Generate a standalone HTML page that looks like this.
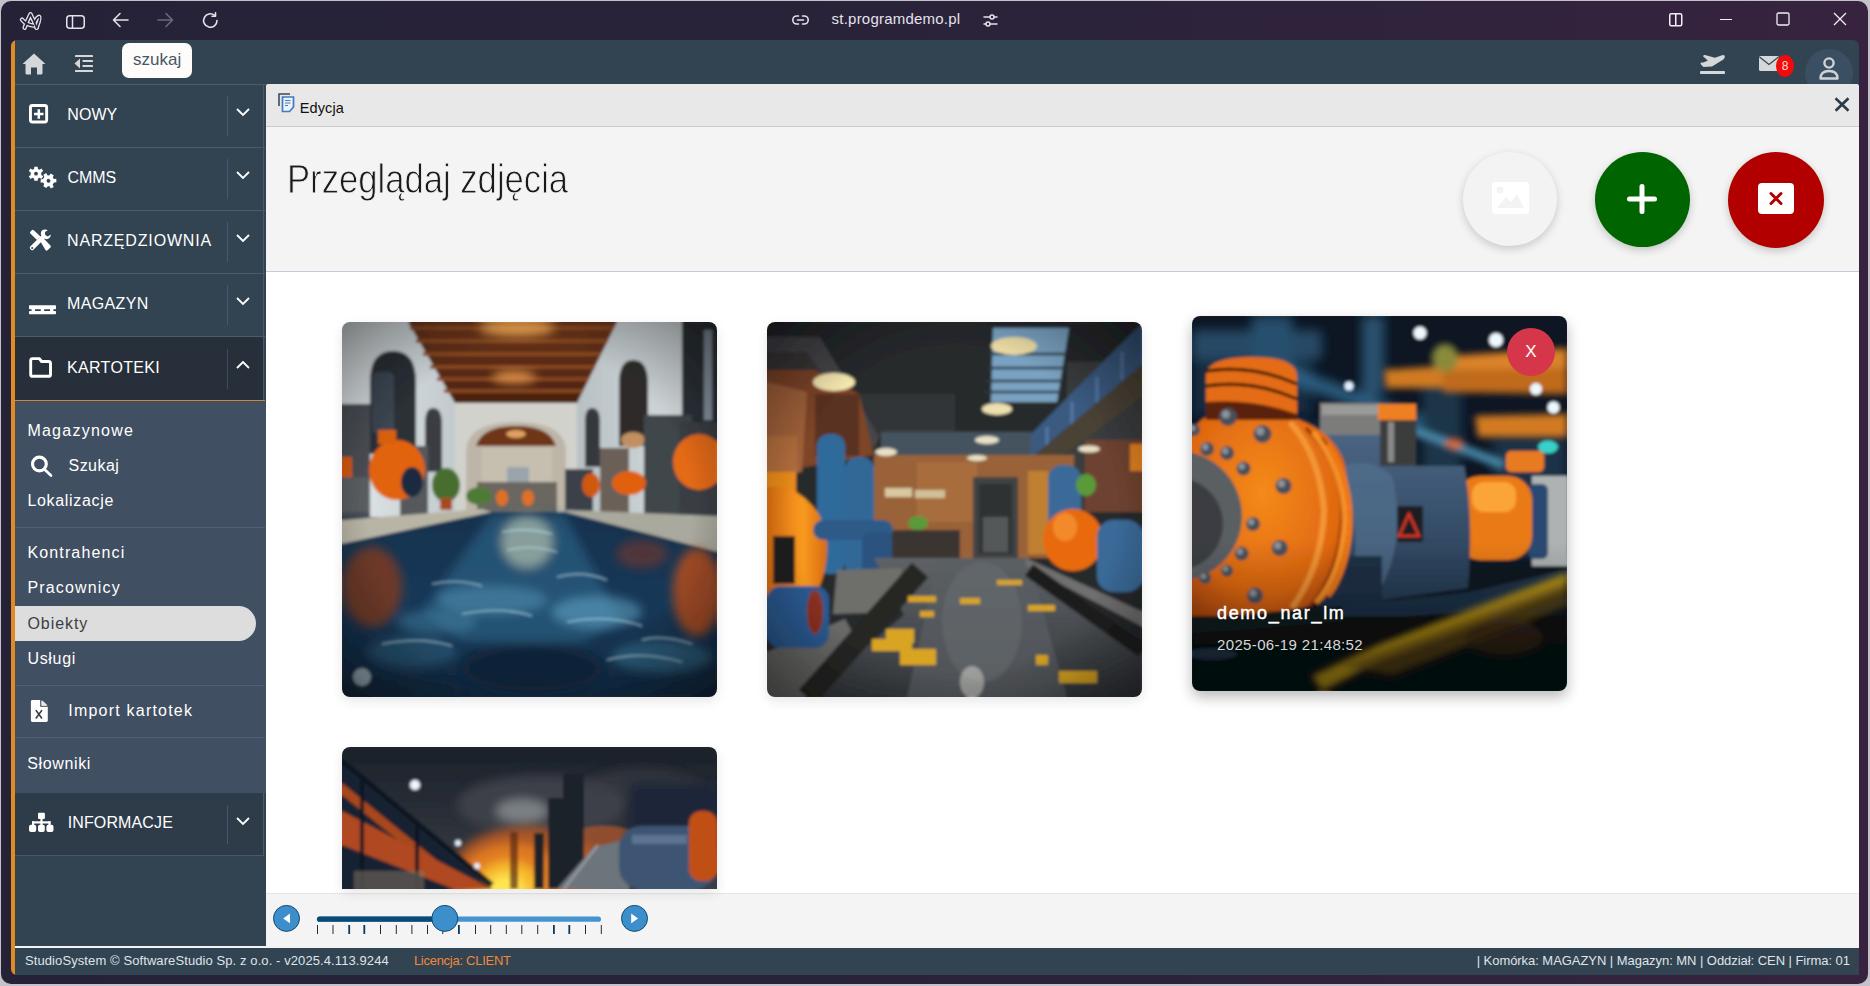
<!DOCTYPE html>
<html><head><meta charset="utf-8">
<style>
*{box-sizing:border-box;margin:0;padding:0}
html,body{width:1870px;height:986px;overflow:hidden;background:#c4c2c9;font-family:"Liberation Sans",sans-serif;position:relative}
.a{position:absolute}
svg{display:block;overflow:visible}
#win{left:1px;top:1px;width:1867px;height:983px;border-radius:10px;background:linear-gradient(90deg,#252238 0%,#2a2339 55%,#37233f 100%)}
#app{left:11px;top:40px;width:1848px;height:935px;border-radius:6px;overflow:hidden;background:#324351}
.sep{height:1px;background:#4b5c6d}
.mi{color:#fff;font-size:16px;white-space:nowrap;line-height:1}
.sub{color:#fff;font-size:16px;white-space:nowrap;line-height:1}
.tx{white-space:nowrap;line-height:1}
.ft{color:#dfe4ea;font-size:12.5px;white-space:nowrap;line-height:1}
</style></head><body>
<div id="win" class="a"></div>

<!-- browser title bar icons -->
<svg class="a" style="left:16px;top:8px" width="30" height="26" viewBox="0 0 30 26" fill="none" stroke-linecap="round" stroke-linejoin="round">
  <g stroke="#e6e1ec" stroke-width="4.4"><path d="M8.6 19.8 Q11 13 14.5 6.2 Q18 13 20.6 19.8"/><path d="M6 11.6 Q10 16.6 17.4 17.6"/><path d="M18.5 14.5 Q21.5 8.5 23.3 8.8 Q24.6 9.6 20.6 19.8"/></g>
  <g stroke="#252238" stroke-width="1.7"><path d="M8.6 19.8 Q11 13 14.5 6.2 Q18 13 20.6 19.8"/><path d="M6 11.6 Q10 16.6 17.4 17.6"/><path d="M18.5 14.5 Q21.5 8.5 23.3 8.8 Q24.6 9.6 20.6 19.8"/></g>
</svg>
<svg class="a" style="left:66px;top:15px" width="19" height="14" viewBox="0 0 19 14" fill="none" stroke="#e6e1ec" stroke-width="1.5">
  <rect x="0.75" y="0.75" width="17.5" height="12.5" rx="3"/><line x1="6.5" y1="1" x2="6.5" y2="13"/>
</svg>
<svg class="a" style="left:112px;top:12px" width="17" height="16" viewBox="0 0 17 16" fill="none" stroke="#e6e1ec" stroke-width="1.6" stroke-linecap="round" stroke-linejoin="round">
  <path d="M16 8 H1.5 M8 1.5 L1.5 8 L8 14.5"/>
</svg>
<svg class="a" style="left:157px;top:12px" width="17" height="16" viewBox="0 0 17 16" fill="none" stroke="#6d6780" stroke-width="1.6" stroke-linecap="round" stroke-linejoin="round">
  <path d="M1 8 H15.5 M9 1.5 L15.5 8 L9 14.5"/>
</svg>
<svg class="a" style="left:202px;top:12px" width="17" height="17" viewBox="0 0 17 17" fill="none" stroke="#e6e1ec" stroke-width="1.6" stroke-linecap="round" stroke-linejoin="round">
  <path d="M15 8.5 A6.7 6.7 0 1 1 12.6 3.4"/><path d="M13.5 0.8 V4.2 H10"/>
</svg>
<svg class="a" style="left:792px;top:15px" width="17" height="10" viewBox="0 0 17 10" fill="none" stroke="#e6e1ec" stroke-width="1.6" stroke-linecap="round">
  <path d="M6.5 1 H4.8 A3.8 3.8 0 0 0 4.8 9 H6.5 M10.5 1 H12.2 A3.8 3.8 0 0 1 12.2 9 H10.5 M5.5 5 H11.5"/>
</svg>
<svg class="a" style="left:983px;top:14px" width="15" height="13" viewBox="0 0 15 13" fill="none" stroke="#e6e1ec" stroke-width="1.5" stroke-linecap="round">
  <path d="M1 3 H14 M1 10 H14"/><circle cx="9" cy="3" r="2" fill="#2a2339"/><circle cx="5" cy="10" r="2" fill="#2a2339"/>
</svg>
<svg class="a" style="left:1669px;top:13px" width="14" height="14" viewBox="0 0 14 14" fill="none" stroke="#f2eef5" stroke-width="1.5">
  <rect x="0.75" y="0.75" width="12" height="12" rx="1.5"/><line x1="6.75" y1="1" x2="6.75" y2="13"/>
</svg>
<div class="a" style="left:1720px;top:19px;width:12px;height:1.3px;background:#f2eef5"></div>
<svg class="a" style="left:1776px;top:12px" width="14" height="14" viewBox="0 0 14 14" fill="none" stroke="#f2eef5" stroke-width="1.3">
  <rect x="1" y="1" width="12" height="12" rx="1.5"/>
</svg>
<svg class="a" style="left:1833px;top:12px" width="14" height="14" viewBox="0 0 14 14" fill="none" stroke="#f2eef5" stroke-width="1.3">
  <path d="M1 1 L13 13 M13 1 L1 13"/>
</svg>

<div id="app" class="a">
  <div class="a" style="left:0;top:0;width:4px;height:935px;background:#e28b22"></div>
</div>

<!-- top app bar -->
<div class="a sep" style="left:15px;top:84px;width:251px"></div>
<svg class="a" style="left:22px;top:53px" width="24" height="22" viewBox="0 0 24 22">
  <path d="M12 0.5 L23.5 11 L20.5 11 L20.5 20 Q20.5 21.5 19 21.5 L15 21.5 L15 14.5 L9 14.5 L9 21.5 L5 21.5 Q3.5 21.5 3.5 20 L3.5 11 L0.5 11 Z" fill="#d6d7d9"/>
</svg>
<svg class="a" style="left:74px;top:54px" width="20" height="19" viewBox="0 0 20 19" fill="#d6d7d9">
  <rect x="1" y="1" width="18" height="2" rx="0.5"/><rect x="8.5" y="6" width="10.5" height="2" rx="0.5"/><rect x="8.5" y="11" width="10.5" height="2" rx="0.5"/><rect x="1" y="16" width="18" height="2" rx="0.5"/>
  <path d="M0.5 9.5 L6 4.5 L6 14.5 Z"/>
</svg>
<div class="a" style="left:122px;top:43px;width:70px;height:35px;border-radius:7px;background:#fdfcfb"></div>

<svg class="a" style="left:1700px;top:54px" width="26" height="21" viewBox="0 0 26 21" fill="#d6d7d9">
  <path d="M3.5 13 L12 12.5 L23.4 5.4 Q25.2 3.6 24.8 2.2 Q24 0.8 22.8 1.1 L14.9 3.7 L5 1 Q3.6 0.8 3 2.2 L7.8 6.5 L3.5 8.5 L1.2 8.6 Q0.2 9 0.7 10.2 Z"/>
  <rect x="0" y="17" width="25" height="3" rx="0.8"/>
</svg>
<svg class="a" style="left:1759px;top:56px" width="20" height="15" viewBox="0 0 20 15">
  <rect x="0" y="0" width="20" height="15" rx="1.5" fill="#d6d7d9"/><path d="M0.5 1 L10 8.5 L19.5 1" fill="none" stroke="#324351" stroke-width="1.2"/>
</svg>
<div class="a" style="left:1776px;top:55px;width:18px;height:22px;border-radius:50%;background:#f20b0b"></div>
<div class="a" style="left:1776px;top:59px;width:18px;text-align:center;font-size:12px;line-height:1.2;color:#ffd8d0">8</div>
<div class="a" style="left:1805px;top:49px;width:48px;height:35px;overflow:hidden"><div style="width:48px;height:48px;border-radius:50%;background:#3b4f63"></div></div>
<svg class="a" style="left:1819px;top:57px" width="20" height="23" viewBox="0 0 20 23" fill="none" stroke="#d0d3d6" stroke-width="2.4">
  <circle cx="10" cy="6" r="4.6"/><path d="M1.5 21.5 Q1.5 14 10 14 Q18.5 14 18.5 21.5 Z" stroke-linejoin="round"/>
</svg>

<!-- content panel -->
<div class="a" style="left:266px;top:84px;width:1593px;height:862px;background:#fff;border-radius:3px 3px 0 0;overflow:hidden">
  <div class="a" style="left:0;top:0;width:1593px;height:43px;background:#e8e8e8;border-bottom:1px solid #c9c9c9"></div>
  <div class="a" style="left:0;top:43px;width:1593px;height:145px;background:#f4f4f4;border-bottom:1px solid #c5cbd8"></div>
  <div class="a" style="left:0;top:809px;width:1593px;height:53px;background:#f4f4f4;border-top:1px solid #e6e6e6"></div>
</div>
<svg class="a" style="left:278px;top:93px" width="17" height="20" viewBox="0 0 17 20" fill="none">
  <path d="M1 13 V1 H12" stroke="#3d4a58" stroke-width="1.6"/>
  <path d="M4.5 4 H15.5 V14 L11.5 18.5 H4.5 Z" stroke="#3f7cc0" stroke-width="1.7" fill="#eef3fa"/>
  <path d="M7 7.5 H12.5 M7 10 H12.5 M7 12.5 H10" stroke="#3f7cc0" stroke-width="1"/>
</svg>
<svg class="a" style="left:1835px;top:98px" width="14" height="13" viewBox="0 0 14 13" stroke="#2c3a48" stroke-width="2.6" stroke-linecap="square">
  <path d="M1.5 1.2 L12.5 11.8 M12.5 1.2 L1.5 11.8"/>
</svg>
<div class="a tx" id="title" style="left:287px;top:158.6px;font-size:40px;color:#1a1a1a;transform:scaleX(0.866);transform-origin:0 0;-webkit-text-stroke:0.9px #f4f4f4">Przeglądaj zdjęcia</div>

<!-- action buttons -->
<div class="a" style="left:1463px;top:152px;width:94px;height:94px;border-radius:50%;background:#f3f3f3;box-shadow:0 3px 8px rgba(0,0,0,0.18)"></div>
<svg class="a" style="left:1492px;top:182px" width="37" height="32" viewBox="0 0 37 32">
  <rect x="0" y="0" width="37" height="32" rx="3" fill="#fff"/>
  <circle cx="8" cy="8" r="3.5" fill="#f3f3f3"/><path d="M5 26 L14 15 L19 20 L25 12 L32 26 Z" fill="#f3f3f3"/>
</svg>
<div class="a" style="left:1595px;top:152px;width:95px;height:95px;border-radius:50%;background:#006400;box-shadow:0 3px 8px rgba(0,0,0,0.2)"></div>
<svg class="a" style="left:1627px;top:184px" width="30" height="30" viewBox="0 0 30 30" stroke="#fff" stroke-width="5" stroke-linecap="round">
  <path d="M15 2.5 V27.5 M2.5 15 H27.5"/>
</svg>
<div class="a" style="left:1728px;top:152px;width:96px;height:96px;border-radius:50%;background:#b20000;box-shadow:0 3px 8px rgba(0,0,0,0.2)"></div>
<svg class="a" style="left:1758px;top:183px" width="36" height="31" viewBox="0 0 36 31">
  <rect x="0" y="0" width="36" height="31" rx="4" fill="#fff"/>
  <path d="M13 10.5 L23 20.5 M23 10.5 L13 20.5" stroke="#b20000" stroke-width="3" stroke-linecap="round"/>
</svg>

<div class="a" style="left:342px;top:322px;width:375px;height:375px;border-radius:8px;box-shadow:0 4px 12px rgba(0,0,0,0.10)"></div>
<div class="a" style="left:767px;top:322px;width:375px;height:375px;border-radius:8px;box-shadow:0 4px 12px rgba(0,0,0,0.10)"></div>
<div class="a" style="left:342px;top:747px;width:375px;height:142px;border-radius:8px 8px 0 0;box-shadow:0 4px 12px rgba(0,0,0,0.10)"></div>
<!-- photo 1 -->
<svg class="a" style="left:342px;top:322px" width="375" height="375" viewBox="0 0 375 375">
<defs>
<clipPath id="c1"><rect width="375" height="375" rx="8"/></clipPath>
<filter id="bl" x="0" y="0" width="100%" height="100%"><feGaussianBlur stdDeviation="1.6"/><feComponentTransfer><feFuncA type="table" tableValues="1 1"/></feComponentTransfer></filter>
<filter id="b6" x="-50%" y="-50%" width="200%" height="200%"><feGaussianBlur stdDeviation="5"/></filter>
<linearGradient id="lw" x1="0" x2="1"><stop offset="0" stop-color="#e2e8ea"/><stop offset="1" stop-color="#c0c8cc"/></linearGradient>
<linearGradient id="rw" x1="0" x2="1"><stop offset="0" stop-color="#b8c0c4"/><stop offset="1" stop-color="#dce2e4"/></linearGradient>
<linearGradient id="wat" x1="0" y1="0" x2="0" y2="1"><stop offset="0" stop-color="#16324e"/><stop offset="0.5" stop-color="#183858"/><stop offset="1" stop-color="#122a42"/></linearGradient>
<radialGradient id="vig" cx="0.5" cy="0.5" r="0.72"><stop offset="0.6" stop-color="#000" stop-opacity="0"/><stop offset="1" stop-color="#000" stop-opacity="0.5"/></radialGradient>
<linearGradient id="ceil" x1="0" y1="0" x2="0" y2="1"><stop offset="0" stop-color="#6a3418"/><stop offset="1" stop-color="#4a2210"/></linearGradient>
</defs>
<g clip-path="url(#c1)"><g filter="url(#bl)">
<rect width="375" height="375" fill="url(#wat)"/>
<rect x="0" y="0" width="375" height="195" fill="#c4cacc"/>
<rect x="0" y="0" width="120" height="195" fill="url(#lw)"/>
<rect x="235" y="0" width="140" height="195" fill="url(#rw)"/>
<polygon points="66,0 275,0 235,81 113,81" fill="url(#ceil)"/>
<g stroke="#8a4a22" stroke-width="3.5"><line x1="68" y1="6" x2="272" y2="6"/><line x1="74" y1="19" x2="266" y2="19"/><line x1="81" y1="32" x2="259" y2="32"/><line x1="88" y1="45" x2="253" y2="45"/><line x1="95" y1="57" x2="247" y2="57"/><line x1="102" y1="69" x2="241" y2="69"/></g>
<ellipse cx="175" cy="6" rx="38" ry="8" fill="#e8a050" filter="url(#b6)"/>
<ellipse cx="172" cy="55" rx="22" ry="6" fill="#e09048" filter="url(#b6)"/>
<rect x="113" y="81" width="122" height="112" fill="#d2d2cc"/>
<path d="M124 195 V130 Q124 100 174 100 Q224 100 224 130 V195 Z" fill="#bdb6a8"/>
<path d="M134 124 Q140 104 174 104 Q208 104 214 124 Z" fill="#6e3418"/>
<ellipse cx="174" cy="112" rx="10" ry="4" fill="#e0a060"/>
<rect x="140" y="126" width="70" height="40" fill="#c6bfb0"/>
<rect x="165" y="145" width="22" height="22" fill="#9aa4aa"/>
<rect x="135" y="160" width="80" height="30" fill="#6a6660"/>
<ellipse cx="160" cy="176" rx="6" ry="8" fill="#e07020"/>
<ellipse cx="186" cy="176" rx="6" ry="8" fill="#e07020"/>
<path d="M28 132 V60 Q28 29 51 29 Q74 29 74 60 V132 Z" fill="#2a3036"/>
<rect x="30" y="50" width="22" height="62" rx="6" fill="#3c4652"/>
<path d="M83 150 V102 Q83 86 91 86 Q100 86 100 102 V150 Z" fill="#3a3e42"/>
<rect x="0" y="82" width="28" height="113" fill="#4a4e54"/>
<rect x="58" y="124" width="28" height="71" fill="#54585c"/>
<rect x="0" y="155" width="28" height="35" fill="#5a5e62"/>
<ellipse cx="55" cy="148" rx="28" ry="30" fill="#e2640e"/>
<rect x="36" y="108" width="18" height="14" fill="#d8600e"/>
<ellipse cx="70" cy="160" rx="11" ry="15" fill="#1c2a40"/>
<rect x="0" y="135" width="10" height="20" fill="#d85a10"/>
<ellipse cx="104" cy="163" rx="14" ry="17" fill="#466e2e"/>
<rect x="98" y="176" width="12" height="12" fill="#a84a1e"/>
<ellipse cx="137" cy="174" rx="13" ry="9" fill="#507a34"/>
<path d="M277 124 V62 Q277 38 291 38 Q306 38 306 62 V124 Z" fill="#2e2c2a"/>
<ellipse cx="291" cy="118" rx="12" ry="8" fill="#c09060"/>
<path d="M243 145 V100 Q243 86 250 86 Q258 86 258 100 V145 Z" fill="#34383c"/>
<rect x="340" y="0" width="35" height="100" fill="#2c3238"/>
<rect x="362" y="8" width="8" height="90" fill="#8a96a2"/>
<rect x="302" y="93" width="48" height="102" fill="#40464c"/>
<rect x="258" y="126" width="29" height="69" fill="#6a6058"/>
<rect x="223" y="147" width="28" height="48" fill="#3a4048"/>
<rect x="337" y="100" width="38" height="95" fill="#3a3e44"/>
<ellipse cx="357" cy="140" rx="26" ry="28" fill="#e46a18"/>
<ellipse cx="287" cy="161" rx="17" ry="12" fill="#e06010"/>
<ellipse cx="249" cy="163" rx="9" ry="12" fill="#d05810"/>
<polygon points="0,198 140,187 150,190 0,222" fill="#b9b5a6"/>
<polygon points="225,188 375,194 375,230 222,190" fill="#a9a99e"/>
<polygon points="0,222 150,190 222,190 375,230 375,375 0,375" fill="url(#wat)"/>
<g filter="url(#b6)">
<polygon points="150,192 222,192 280,300 240,320 120,320 80,290" fill="#2e6688" opacity="0.6"/>
<ellipse cx="185" cy="220" rx="26" ry="26" fill="#c8d0b8" opacity="0.6"/>
<ellipse cx="150" cy="278" rx="55" ry="14" fill="#5aa0c0" opacity="0.45"/>
<ellipse cx="255" cy="290" rx="45" ry="16" fill="#68b0d0" opacity="0.5"/>
<ellipse cx="95" cy="300" rx="40" ry="12" fill="#4a90b0" opacity="0.4"/>
<ellipse cx="30" cy="265" rx="30" ry="40" fill="#8a3a1e" opacity="0.75"/>
<ellipse cx="355" cy="270" rx="24" ry="44" fill="#c05018" opacity="0.8"/>
<ellipse cx="300" cy="232" rx="26" ry="14" fill="#8a3a20" opacity="0.5"/>
<ellipse cx="320" cy="335" rx="50" ry="16" fill="#3a7898" opacity="0.55"/>
<ellipse cx="70" cy="330" rx="45" ry="16" fill="#2e6080" opacity="0.55"/>
<ellipse cx="190" cy="345" rx="70" ry="24" fill="#0e2034" opacity="0.8"/>
<ellipse cx="60" cy="368" rx="60" ry="12" fill="#12263c" opacity="0.7"/>
</g>
<g stroke="#c8ecf8" stroke-width="1.6" opacity="0.55" fill="none">
<path d="M160 210 Q185 205 210 212"/><path d="M165 228 Q190 222 215 230"/><path d="M90 262 Q115 256 140 264"/><path d="M215 255 Q240 248 265 258"/><path d="M120 292 Q160 284 190 294"/><path d="M225 300 Q265 292 300 304"/><path d="M40 322 Q80 314 110 324"/><path d="M265 338 Q300 328 340 340"/><path d="M300 318 Q320 312 350 322"/>
</g>
<ellipse cx="20" cy="355" rx="9" ry="9" fill="#d0e0e8" opacity="0.7"/>
<rect width="375" height="375" fill="url(#vig)"/>
</g></g>
</svg>

<!-- photo 2 -->
<svg class="a" style="left:767px;top:322px" width="375" height="375" viewBox="0 0 375 375">
<defs><clipPath id="c2"><rect width="375" height="375" rx="8"/></clipPath>
<linearGradient id="fl2" x1="0" y1="0" x2="0" y2="1"><stop offset="0" stop-color="#5e6266"/><stop offset="1" stop-color="#34383c"/></linearGradient>
<linearGradient id="ot2" x1="0" x2="1"><stop offset="0" stop-color="#e07010"/><stop offset="0.6" stop-color="#f89a20"/><stop offset="1" stop-color="#d86a10"/></linearGradient>
</defs>
<g clip-path="url(#c2)"><g filter="url(#bl)">
<rect width="375" height="375" fill="#26292c"/>
<rect x="92" y="72" width="96" height="42" fill="#333638"/>
<polygon points="0,15 53,15 112,115 108,126 0,62" fill="#45454a"/>
<polygon points="0,30 40,30 95,110 0,80" fill="#3a3838"/>
<polygon points="226,6 302,6 290,80 224,80" fill="#7aa2c2"/>
<g stroke="#2a3440" stroke-width="2.5"><line x1="222" y1="32" x2="300" y2="32"/><line x1="220" y1="46" x2="298" y2="46"/><line x1="218" y1="59" x2="296" y2="59"/><line x1="216" y1="70" x2="294" y2="70"/></g>
<rect x="300" y="40" width="76" height="150" fill="#3a3c3e"/>
<rect x="318" y="118" width="58" height="72" fill="#6e4230"/>
<polygon points="258,118 376,0 376,42 264,136" fill="#3a5a80"/>
<g stroke="#5f80b0" stroke-width="3" opacity="0.8"><line x1="280" y1="105" x2="280" y2="125"/><line x1="305" y1="80" x2="305" y2="103"/><line x1="330" y1="55" x2="330" y2="80"/><line x1="355" y1="30" x2="355" y2="58"/></g>
<polygon points="264,136 376,42 376,74 284,142" fill="#4a4236"/>
<rect x="114" y="110" width="150" height="24" fill="#44525f"/>
<polygon points="0,48 48,48 92,72 107,133 0,152" fill="#7e4428"/>
<polygon points="0,60 40,70 35,150 0,152" fill="#a0603a"/>
<rect x="0" y="114" width="30" height="38" fill="#b06c3c"/>
<rect x="48" y="72" width="44" height="62" fill="#5a3020"/>
<rect x="107" y="133" width="200" height="103" fill="#9a6238"/>
<rect x="150" y="140" width="60" height="60" fill="#aa7040" opacity="0.8"/>
<rect x="363" y="122" width="13" height="27" fill="#e08020"/>
<rect x="118" y="166" width="27" height="9" fill="#d8c8a0"/>
<rect x="148" y="168" width="30" height="8" fill="#d0c098"/>
<rect x="206" y="155" width="45" height="81" fill="#404244"/>
<rect x="212" y="162" width="33" height="70" fill="#2e3032"/>
<rect x="216" y="195" width="25" height="35" fill="#555858"/>
<rect x="261" y="149" width="20" height="83" fill="#c08030"/>
<rect x="108" y="208" width="85" height="28" fill="#3a3430"/>
<ellipse cx="151" cy="201" rx="10" ry="7" fill="#5a9a3a"/>
<ellipse cx="67" cy="60" rx="21" ry="9" fill="#f6e8b0"/>
<ellipse cx="247" cy="24" rx="23" ry="9" fill="#ecdca4"/>
<ellipse cx="230" cy="87" rx="15" ry="6" fill="#ece0b0"/>
<ellipse cx="119" cy="130" rx="11" ry="4" fill="#e8e0c8"/>
<ellipse cx="220" cy="118" rx="12" ry="4" fill="#e8e0c8"/>
<ellipse cx="210" cy="136" rx="10" ry="3" fill="#e8e0c8"/>
<ellipse cx="322" cy="127" rx="11" ry="3.5" fill="#e8e0c8"/>
<rect x="0" y="150" width="29" height="40" fill="#e88a1a"/>
<rect x="50" y="112" width="28" height="140" rx="12" fill="#2f6a9a"/>
<rect x="78" y="135" width="29" height="120" rx="12" fill="#306896"/>
<path d="M0 165 H20 Q62 185 60 230 Q58 265 40 284 H0 Z" fill="url(#ot2)"/>
<rect x="6" y="214" width="22" height="48" fill="#1e1e1e"/>
<rect x="46" y="198" width="80" height="20" rx="10" fill="#2e5a88"/>
<rect x="95" y="210" width="30" height="55" rx="8" fill="#2a5280"/>
<polygon points="107,236 260,236 376,329 376,375 40,375 137,293" fill="url(#fl2)"/>
<polygon points="171,236 261,236 300,375 140,375" fill="#5a5e62" opacity="0.7"/>
<ellipse cx="215" cy="300" rx="40" ry="60" fill="#6a7074" opacity="0.45"/>
<ellipse cx="205" cy="360" rx="12" ry="16" fill="#c8c8c0" opacity="0.6"/>
<polygon points="70,248 135,246 128,290 66,292" fill="#6e6e6a"/>
<polygon points="0,375 0,330 78,297 85,310 40,375" fill="#6a6a68"/>
<line x1="153" y1="248" x2="40" y2="375" stroke="#262624" stroke-width="22"/>
<rect x="0" y="264" width="62" height="62" rx="14" fill="#2a5a90"/>
<ellipse cx="48" cy="290" rx="8" ry="22" fill="#8a3020"/>
<polygon points="259,236 376,290 376,305 259,244" fill="#707070"/>
<line x1="262" y1="248" x2="376" y2="329" stroke="#1e1e1e" stroke-width="14"/>
<rect x="281" y="143" width="33" height="70" rx="14" fill="#3a6a98"/>
<ellipse cx="306" cy="218" rx="30" ry="31" fill="#e86a10"/>
<ellipse cx="298" cy="205" rx="12" ry="14" fill="#f89838" opacity="0.7"/>
<ellipse cx="319" cy="163" rx="10" ry="11" fill="#5a9a3a"/>
<rect x="330" y="198" width="46" height="72" rx="16" fill="#3a6a98"/>
<g fill="#d8a420"><rect x="119" y="307" width="28" height="14"/><rect x="105" y="317" width="40" height="12"/><rect x="133" y="327" width="36" height="16"/><rect x="153" y="289" width="14" height="6"/><rect x="193" y="276" width="20" height="6"/><rect x="261" y="283" width="27" height="6"/><rect x="292" y="349" width="38" height="12"/><rect x="269" y="333" width="12" height="10"/><rect x="141" y="274" width="28" height="6"/><rect x="230" y="258" width="25" height="5"/></g>
<rect width="375" height="375" fill="url(#vig)"/>
</g></g>
</svg>

<!-- photo 4 -->
<div class="a" style="left:342px;top:747px;width:375px;height:142px;overflow:hidden;border-radius:8px 8px 0 0">
<svg width="375" height="142" viewBox="0 0 375 142">
<defs><radialGradient id="glo4" cx="0.5" cy="1" r="0.8"><stop offset="0" stop-color="#ffe040"/><stop offset="0.35" stop-color="#f0a020"/><stop offset="0.7" stop-color="#c85a1a"/><stop offset="1" stop-color="#3a3034" stop-opacity="0"/></radialGradient>
<linearGradient id="sky4" x1="0" y1="0" x2="0" y2="1"><stop offset="0" stop-color="#1b2129"/><stop offset="1" stop-color="#3a3e46"/></linearGradient></defs>
<g filter="url(#bl)">
<rect width="375" height="142" fill="url(#sky4)"/>
<g filter="url(#b6)"><ellipse cx="200" cy="58" rx="85" ry="30" fill="#42464e" opacity="0.8"/>
<ellipse cx="180" cy="64" rx="26" ry="12" fill="#8a8e94" opacity="0.8"/><ellipse cx="300" cy="40" rx="60" ry="18" fill="#3a3e46" opacity="0.6"/></g>
<g filter="url(#b6)"><ellipse cx="185" cy="125" rx="75" ry="45" fill="#b85a24" opacity="0.9"/><ellipse cx="170" cy="132" rx="52" ry="36" fill="#e07a22"/><ellipse cx="166" cy="142" rx="34" ry="28" fill="#f8b82c"/><ellipse cx="164" cy="145" rx="20" ry="18" fill="#ffe650"/></g>
<ellipse cx="262" cy="95" rx="40" ry="16" fill="#b85a2a" opacity="0.7"/>
<rect x="168" y="85" width="8" height="57" fill="#5a2a14" opacity="0.7"/>
<rect x="192" y="86" width="10" height="56" fill="#1a2028"/>
<rect x="206" y="51" width="17" height="91" fill="#1c222a"/>
<rect x="221" y="26" width="21" height="116" fill="#1c222a"/>
<polygon points="215,142 252,100 287,92 287,142" fill="#6c747c"/>
<line x1="222" y1="142" x2="256" y2="98" stroke="#a0a4a8" stroke-width="2"/>
<rect x="287" y="36" width="88" height="67" fill="#1e2838" filter="url(#b6)"/>
<rect x="277" y="79" width="98" height="63" rx="22" fill="#3e5472"/>
<rect x="290" y="88" width="55" height="9" fill="#6a80a0" opacity="0.7"/>
<rect x="347" y="64" width="28" height="70" rx="12" fill="#c05018"/>
<polygon points="0,10 150,142 0,142" fill="#182230"/>
<polygon points="0,36 130,142 116,142 0,48" fill="#a8461e"/>
<polygon points="0,64 150,142 112,142 0,98" fill="#b04a20"/><line x1="0" y1="14" x2="150" y2="138" stroke="#0e1620" stroke-width="5"/><line x1="20" y1="30" x2="20" y2="142" stroke="#0e1620" stroke-width="4"/><line x1="75" y1="78" x2="75" y2="142" stroke="#0e1620" stroke-width="4"/>

<rect x="12" y="124" width="70" height="18" fill="#8a7a6a" opacity="0.5"/>
<circle cx="73" cy="38" r="5" fill="#f0f6ff"/><circle cx="116" cy="96" r="3" fill="#e8f0ff"/><circle cx="135" cy="119" r="3" fill="#e8f0ff"/>
</g>
</svg>
</div>

<!-- photo 3 (hovered) -->
<div class="a" style="left:1192px;top:316px;width:375px;height:375px;border-radius:8px;box-shadow:0 6px 14px rgba(0,0,0,0.28)"></div>
<svg class="a" style="left:1192px;top:316px" width="375" height="375" viewBox="0 0 375 375">
<defs><clipPath id="c3"><rect width="375" height="375" rx="8"/></clipPath>
<linearGradient id="ov" x1="0" y1="0" x2="0" y2="1"><stop offset="0.6" stop-color="#000" stop-opacity="0"/><stop offset="1" stop-color="#000" stop-opacity="0.45"/></linearGradient>
<radialGradient id="orf" cx="0.45" cy="0.4" r="0.7"><stop offset="0" stop-color="#f58a1a"/><stop offset="0.7" stop-color="#e06810"/><stop offset="1" stop-color="#b04808"/></radialGradient>
<linearGradient id="bb3" x1="0" y1="0" x2="0" y2="1"><stop offset="0" stop-color="#4a6482"/><stop offset="1" stop-color="#243a52"/></linearGradient>
<filter id="bl3" x="0" y="0" width="100%" height="100%"><feGaussianBlur stdDeviation="1.5"/><feComponentTransfer><feFuncA type="table" tableValues="1 1"/></feComponentTransfer></filter>
<filter id="bb3b" x="-20%" y="-20%" width="140%" height="140%"><feGaussianBlur stdDeviation="3"/></filter>
<filter id="bbig" x="-50%" y="-50%" width="200%" height="200%"><feGaussianBlur stdDeviation="6"/></filter>
</defs>
<g clip-path="url(#c3)"><g filter="url(#bl3)">
<rect width="375" height="375" fill="#0b1522"/>
<g filter="url(#bbig)">
<rect x="0" y="14" width="130" height="30" fill="#264a66"/>
<rect x="0" y="45" width="120" height="55" fill="#142a40"/>
<rect x="60" y="0" width="40" height="60" fill="#28506e"/>
<rect x="170" y="0" width="22" height="80" fill="#2a5272"/>
<rect x="100" y="110" width="40" height="60" fill="#1c3a58"/>
<line x1="90" y1="55" x2="240" y2="112" stroke="#2e6488" stroke-width="14"/>
<rect x="300" y="120" width="75" height="120" fill="#1a3248"/>
<rect x="230" y="60" width="40" height="100" fill="#1e3448"/>
</g>
<g filter="url(#bb3b)"><polygon points="192,54 252,50 252,72 194,72" fill="#d07a20"/>
<polygon points="251,40 375,32 375,78 251,76" fill="#c06a1a"/>
<polygon points="255,42 375,34 375,52 258,54" fill="#e08a30" opacity="0.8"/>
<polygon points="283,100 375,98 375,121 286,121" fill="#d27a20"/>
<ellipse cx="253" cy="42" rx="13" ry="14" fill="#8a8a3a"/>
<line x1="222" y1="114" x2="312" y2="149" stroke="#4a88a8" stroke-width="9"/>
<ellipse cx="262" cy="128" rx="9" ry="5" fill="#e06a30"/>
</g><circle cx="228" cy="17" r="6.5" fill="#eef8ff"/><circle cx="304" cy="24" r="7" fill="#eef8ff"/><circle cx="157" cy="70" r="4.5" fill="#dff0ff"/><circle cx="344" cy="73" r="6" fill="#eef8ff"/><circle cx="361.5" cy="91.5" r="6" fill="#eef8ff"/>
<ellipse cx="356" cy="131" rx="10" ry="6.5" fill="#38d0c8"/>
<rect x="340" y="160" width="35" height="90" fill="#aeb2b2"/>
<rect x="336" y="168" width="20" height="75" rx="6" fill="#2a4a72"/>
<rect x="314" y="135" width="38" height="21" rx="5" fill="#e87a20"/>
<rect x="264" y="160" width="76" height="84" rx="24" fill="#ea7a14"/>
<rect x="280" y="166" width="44" height="30" rx="12" fill="#ffb040" opacity="0.8"/>
<path d="M128 119 H190 V147 L205 150 H272 Q282 200 276 272 L150 290 L140 200 Z" fill="url(#bb3)"/><path d="M150 150 Q180 140 200 160 Q215 220 190 270 L160 275 Q170 210 150 150 Z" fill="#52708e" opacity="0.7"/>
<rect x="130" y="240" width="60" height="60" fill="#1e3046"/>
<rect x="128" y="87" width="60" height="32" fill="#7c7c7a"/>
<rect x="130" y="89" width="56" height="10" fill="#9a9a98"/>
<rect x="186" y="88" width="38" height="16" fill="#ee8020"/>
<rect x="188" y="104" width="36" height="46" fill="#3a3c3e"/>
<rect x="196" y="106" width="6" height="40" fill="#8a8a88"/>
<rect x="205" y="190" width="26" height="36" fill="#1c1e22"/>
<path d="M217 198 L227 220 H207 Z" fill="none" stroke="#e83a20" stroke-width="2.2"/>
<path d="M0 115 Q10 100 20 99 L57 93 Q90 92 105 103 Q140 115 152 145 Q162 190 152 250 Q140 285 110 292 L60 300 L0 302 Z" fill="url(#orf)"/>
<path d="M114 112 Q150 150 150 200 Q148 255 118 290" fill="none" stroke="#8a2a08" stroke-width="3"/>
<path d="M129 122 Q160 160 156 210 Q152 260 130 284" fill="none" stroke="#8a2a08" stroke-width="3"/>
<path d="M98 106 Q128 140 132 195 Q130 250 100 292" fill="none" stroke="#f8a040" stroke-width="6" opacity="0.8"/><path d="M121 116 Q152 155 153 205 Q150 258 124 287" fill="none" stroke="#ff9a2a" stroke-width="6" opacity="0.85"/><path d="M136 128 Q160 165 158 212 Q155 255 136 280" fill="none" stroke="#f07818" stroke-width="5"/>
<path d="M14 60 Q14 41 60 41 Q105 41 105 60 V104 H14 Z" fill="#e46c12"/>
<path d="M14 55 Q60 48 105 68" fill="none" stroke="#1a0a04" stroke-width="3"/>
<path d="M14 70 Q60 63 105 83" fill="none" stroke="#1a0a04" stroke-width="3"/>
<path d="M14 86 Q60 82 105 98 V104 H14 Z" fill="#5a2408"/>
<circle cx="-15" cy="200" r="65" fill="#5a5e62"/>
<circle cx="-15" cy="208" r="46" fill="#3a3e42"/>
<g><circle cx="36" cy="101" r="9" fill="#4a5058"/><circle cx="33.8" cy="98.3" r="4.0" fill="#8a949c"/><circle cx="70.5" cy="118" r="9" fill="#4a5058"/><circle cx="68.2" cy="115.3" r="4.0" fill="#8a949c"/><circle cx="15" cy="133" r="7" fill="#4a5058"/><circle cx="13.2" cy="130.9" r="3.1" fill="#8a949c"/><circle cx="35" cy="137" r="7" fill="#4a5058"/><circle cx="33.2" cy="134.9" r="3.1" fill="#8a949c"/><circle cx="51.5" cy="152.5" r="7" fill="#4a5058"/><circle cx="49.8" cy="150.4" r="3.1" fill="#8a949c"/><circle cx="91.5" cy="170" r="8" fill="#4a5058"/><circle cx="89.5" cy="167.6" r="3.6" fill="#8a949c"/><circle cx="2" cy="114" r="6" fill="#4a5058"/><circle cx="0.5" cy="112.2" r="2.7" fill="#8a949c"/><circle cx="61" cy="208" r="7" fill="#4a5058"/><circle cx="59.2" cy="205.9" r="3.1" fill="#8a949c"/><circle cx="87.7" cy="232" r="8" fill="#4a5058"/><circle cx="85.7" cy="229.6" r="3.6" fill="#8a949c"/><circle cx="49.6" cy="237.6" r="7" fill="#4a5058"/><circle cx="47.9" cy="235.5" r="3.1" fill="#8a949c"/><circle cx="35" cy="254.7" r="6" fill="#4a5058"/><circle cx="33.5" cy="252.9" r="2.7" fill="#8a949c"/><circle cx="13" cy="262" r="6" fill="#4a5058"/><circle cx="11.5" cy="260.2" r="2.7" fill="#8a949c"/><circle cx="63" cy="279.5" r="8" fill="#4a5058"/><circle cx="61.0" cy="277.1" r="3.6" fill="#8a949c"/></g>
<polygon points="150,290 279,276 375,253 375,264 279,295 150,306" fill="#1e3248"/>
<rect x="0" y="300" width="375" height="75" fill="#090c10"/>
<polygon points="0,302 150,290 150,306 0,318" fill="#101820"/>
<g filter="url(#bb3b)"><polygon points="120,360 188,328 375,257 375,273 188,345 130,375" fill="#b89418"/>
<polygon points="150,350 375,266 375,290 200,360" fill="#6a5010" opacity="0.7"/>
<ellipse cx="312" cy="321" rx="40" ry="18" fill="#3a2a18" opacity="0.7"/></g>
<ellipse cx="20" cy="338" rx="25" ry="6" fill="#2a4a6a" opacity="0.6"/>
<rect x="0" y="0" width="375" height="375" fill="url(#ov)"/>
</g></g>
</svg>
<div class="a" style="left:1507px;top:328px;width:48px;height:48px;border-radius:50%;background:#d5364a"></div>
<div class="a" style="left:1507px;top:343px;width:48px;text-align:center;color:#fff;font-size:17px;line-height:1">X</div>

<!-- sidebar menu -->
<div class="a sep" style="left:15px;top:147px;width:250px"></div>
<div class="a sep" style="left:15px;top:210px;width:250px"></div>
<div class="a sep" style="left:15px;top:273px;width:250px"></div>
<div class="a" style="left:15px;top:337px;width:249px;height:63px;background:#262f3a"></div>
<div class="a sep" style="left:15px;top:336px;width:250px"></div>
<div class="a" style="left:15px;top:400px;width:250px;height:1px;background:#c98a3e"></div>
<div class="a" style="left:15px;top:401px;width:251px;height:392px;background:#404f61"></div>
<div class="a" style="left:15px;top:527px;width:250px;height:1px;background:#506074"></div>
<div class="a" style="left:15px;top:685px;width:250px;height:1px;background:#506074"></div>
<div class="a" style="left:15px;top:737px;width:250px;height:1px;background:#506074"></div>
<div class="a" style="left:15px;top:793px;width:248px;height:63px;background:#2e3c4a;border-bottom:1px solid #46586a"></div>
<div class="a" style="left:263px;top:85px;width:1px;height:315px;background:#4a5968"></div><div class="a" style="left:263px;top:793px;width:1px;height:63px;background:#4a5968"></div>

<div class="a" style="left:227px;top:96px;width:1px;height:40px;background:#46586a"></div>
<div class="a" style="left:227px;top:159px;width:1px;height:40px;background:#46586a"></div>
<div class="a" style="left:227px;top:222px;width:1px;height:40px;background:#46586a"></div>
<div class="a" style="left:227px;top:285px;width:1px;height:40px;background:#46586a"></div>
<div class="a" style="left:227px;top:349px;width:1px;height:40px;background:#3e4c5b"></div>
<div class="a" style="left:227px;top:806px;width:1px;height:38px;background:#46586a"></div>

<!-- chevrons -->
<svg class="a" style="left:236px;top:108px" width="14" height="9" viewBox="0 0 14 9" fill="none" stroke="#fff" stroke-width="1.8"><path d="M1 1 L7 7 L13 1"/></svg>
<svg class="a" style="left:236px;top:171px" width="14" height="9" viewBox="0 0 14 9" fill="none" stroke="#fff" stroke-width="1.8"><path d="M1 1 L7 7 L13 1"/></svg>
<svg class="a" style="left:236px;top:234px" width="14" height="9" viewBox="0 0 14 9" fill="none" stroke="#fff" stroke-width="1.8"><path d="M1 1 L7 7 L13 1"/></svg>
<svg class="a" style="left:236px;top:297px" width="14" height="9" viewBox="0 0 14 9" fill="none" stroke="#fff" stroke-width="1.8"><path d="M1 1 L7 7 L13 1"/></svg>
<svg class="a" style="left:236px;top:360px" width="14" height="9" viewBox="0 0 14 9" fill="none" stroke="#fff" stroke-width="1.8"><path d="M1 8 L7 2 L13 8"/></svg>
<svg class="a" style="left:236px;top:817px" width="14" height="9" viewBox="0 0 14 9" fill="none" stroke="#fff" stroke-width="1.8"><path d="M1 1 L7 7 L13 1"/></svg>


<div class="a" style="left:15px;top:606px;width:241px;height:35px;border-radius:0 18px 18px 0;background:#dddddd"></div>

<!-- footer -->
<div class="a" style="left:15px;top:946px;width:1844px;height:2px;background:#f2f3f5"></div>
<div class="a" style="left:15px;top:948px;width:1844px;height:27px;background:#324351"></div>

<!-- sidebar icons -->
<svg class="a" style="left:29px;top:104px" width="20" height="20" viewBox="0 0 20 20" fill="none" stroke="#fff">
  <rect x="1.45" y="1.45" width="16.2" height="16.6" rx="2" stroke-width="2.9"/>
  <path d="M9.8 5.3 V14.7 M5.1 10 H14.5" stroke-width="2.5"/>
</svg>
<svg class="a" style="left:28px;top:166px" width="30" height="24" viewBox="0 0 30 24">
  <defs><path id="gear" d="M-1.6 -7 H1.6 L2 -4.8 L3.6 -4 L5.5 -5.3 L7.2 -2.6 L5.3 -1.2 V1.2 L7.2 2.6 L5.5 5.3 L3.6 4 L2 4.8 L1.6 7 H-1.6 L-2 4.8 L-3.6 4 L-5.5 5.3 L-7.2 2.6 L-5.3 1.2 V-1.2 L-7.2 -2.6 L-5.5 -5.3 L-3.6 -4 L-2 -4.8 Z"/></defs>
  <g transform="translate(8,7.7)"><use href="#gear" fill="#fff"/><circle r="1.9" fill="#324351"/></g>
  <g transform="translate(20.5,14.8) rotate(30) scale(1.05)"><use href="#gear" fill="#fff"/><circle r="1.8" fill="#324351"/></g>
</svg>
<svg class="a" style="left:28px;top:228px" width="24" height="24" viewBox="0 0 24 24" fill="#fff">
  <path d="M2.2 3.9 L4 2.1 Q5 1.5 6 2.4 L12.5 8.5 L9 12 L2.6 5.8 Q1.6 4.8 2.2 3.9 Z"/>
  <path d="M12 12.8 L15 9.8 L22.4 17.4 Q23.3 18.4 22.4 19.4 L19.6 22.2 Q18.6 23.1 17.6 22.2 Z"/>
  <path d="M17.2 1.6 Q13.5 1.4 12.8 5 Q12.6 6.4 13.4 7.6 L2.2 18.6 Q1.2 19.8 2.2 21 L3 21.8 Q4.2 22.8 5.4 21.8 L16.6 10.6 Q18 11.4 19.4 11.1 Q22.6 10.4 22.8 6.6 L19.8 8.4 L17.2 7 L17 4 L19.8 2.2 Q18.6 1.6 17.2 1.6 Z"/>
  <circle cx="4.2" cy="20" r="1" fill="#324351"/>
</svg>
<svg class="a" style="left:29px;top:305px" width="28" height="10" viewBox="0 0 28 10" fill="#fff">
  <rect x="0" y="0.3" width="27" height="3.9" rx="0.8"/>
  <rect x="0" y="6" width="27" height="3.2" rx="0.8"/>
  <rect x="2.6" y="3" width="3.4" height="4"/><rect x="11.8" y="3" width="3.3" height="4"/><rect x="21" y="3" width="3.4" height="4"/>
</svg>
<svg class="a" style="left:29px;top:357px" width="23" height="21" viewBox="0 0 23 21" fill="none" stroke="#fff" stroke-width="2.9" stroke-linejoin="round">
  <path d="M1.7 3.5 Q1.7 1.6 3.6 1.6 H10.4 L12.6 4.5 H19.6 Q21.5 4.5 21.5 6.4 V17.4 Q21.5 19.3 19.6 19.3 H3.6 Q1.7 19.3 1.7 17.4 Z"/>
</svg>
<svg class="a" style="left:30px;top:455px" width="23" height="23" viewBox="0 0 23 23" fill="none" stroke="#fff" stroke-linecap="round">
  <circle cx="9.4" cy="9" r="6.9" stroke-width="3.1"/>
  <path d="M14.6 14.6 L21 20.6" stroke-width="2.7"/>
</svg>
<svg class="a" style="left:30px;top:699px" width="19" height="24" viewBox="0 0 19 24">
  <path d="M2.3 1 H10.6 L17.8 7.5 V21.6 Q17.8 23 16.4 23 H2.3 Q0.9 23 0.9 21.6 V2.4 Q0.9 1 2.3 1 Z" fill="#fdfdfd"/>
  <path d="M10.8 1 V7.2 H17.8" fill="none" stroke="#3a3f46" stroke-width="1.1"/>
  <path d="M12 1.3 L17.6 6.3 H12 Z" fill="#e8e8e8"/>
  <path d="M6.2 11.6 L11.6 19 M11.6 11.6 L6.2 19" stroke="#353b44" stroke-width="1.6" stroke-linecap="round"/>
</svg>
<svg class="a" style="left:29px;top:812px" width="25" height="21" viewBox="0 0 25 21" fill="#fff">
  <rect x="9" y="0.8" width="6.9" height="6.2" rx="1"/>
  <rect x="11.4" y="6" width="2.2" height="7"/>
  <rect x="3" y="9.3" width="18.6" height="2.2"/>
  <rect x="3" y="9.3" width="2.2" height="4"/><rect x="19.4" y="9.3" width="2.2" height="4"/>
  <rect x="0" y="12.8" width="7.2" height="7.2" rx="2"/><rect x="9" y="12.8" width="6.8" height="7.2" rx="2"/><rect x="17.4" y="12.8" width="7.1" height="7.2" rx="2"/>
</svg>

<!-- slider -->
<svg class="a" style="left:270px;top:900px" width="390" height="40" viewBox="270 900 390 40">
  <circle cx="286.5" cy="918.4" r="13" fill="#3d8fcb" stroke="#14466e" stroke-width="1"/>
  <path d="M283.2 918.4 L290 913.6 V923.2 Z" fill="#fff"/>
  <circle cx="634.5" cy="918.4" r="13" fill="#3d8fcb" stroke="#14466e" stroke-width="1"/>
  <path d="M638 918.4 L631.2 913.6 V923.2 Z" fill="#fff"/>
  <rect x="317" y="916.6" width="284" height="5.2" rx="2.6" fill="#4394d0"/>
  <rect x="317" y="916.6" width="128" height="5.2" rx="2.6" fill="#0b4a75"/>
  <g fill="#1d2d3c">
    <rect x="317" y="925" width="1" height="9"/><rect x="332.5" y="925" width="1" height="9"/><rect x="348.3" y="925" width="1.8" height="9" fill="#0b3a5e"/><rect x="363.4" y="925" width="1.8" height="9" fill="#0b3a5e"/>
    <rect x="380" y="925" width="1" height="9"/><rect x="395.8" y="925" width="1" height="9"/><rect x="411.4" y="925" width="1" height="9"/><rect x="427" y="925" width="1" height="9"/>
    <rect x="442.3" y="925" width="1" height="9"/><rect x="458" y="925" width="1.8" height="9" fill="#0b3a5e"/><rect x="475" y="925" width="1" height="9"/><rect x="490.2" y="925" width="1" height="9"/>
    <rect x="505.8" y="925" width="1" height="9"/><rect x="521.3" y="925" width="1" height="9"/><rect x="537.2" y="925" width="1" height="9"/><rect x="553" y="925" width="1.8" height="9" fill="#0b3a5e"/>
    <rect x="568.4" y="925" width="1.8" height="9" fill="#0b3a5e"/><rect x="585" y="925" width="1" height="9"/><rect x="600.8" y="925" width="1" height="9"/>
  </g>
  <circle cx="444.8" cy="918.4" r="13" fill="#3d8fcb" stroke="#14466e" stroke-width="1"/>
</svg>

<!-- TEXTS -->
<div class="a tx" style="left:831.6px;top:11.30px;font-size:15px;letter-spacing:0.214px;color:#e6e1ec">st.programdemo.pl</div>
<div class="a tx" style="left:133px;top:51.31px;font-size:17px;letter-spacing:0.019px;color:#485666">szukaj</div>
<div class="a tx" style="left:299.7px;top:100.73px;font-size:14.5px;letter-spacing:0.128px;color:#111">Edycja</div>
<div class="a tx" style="left:67.3px;top:107.46px;font-size:16px;letter-spacing:0.055px;color:#fff">NOWY</div>
<div class="a tx" style="left:67.6px;top:170.46px;font-size:16px;letter-spacing:-0.098px;color:#fff">CMMS</div>
<div class="a tx" style="left:67px;top:233.26px;font-size:16px;letter-spacing:0.829px;color:#fff">NARZĘDZIOWNIA</div>
<div class="a tx" style="left:67px;top:296.46px;font-size:16px;letter-spacing:0.368px;color:#fff">MAGAZYN</div>
<div class="a tx" style="left:67px;top:359.96px;font-size:16px;letter-spacing:0.321px;color:#fff">KARTOTEKI</div>
<div class="a tx" style="left:67.7px;top:815.46px;font-size:16px;letter-spacing:0.130px;color:#fff">INFORMACJE</div>
<div class="a tx" style="left:27.4px;top:422.96px;font-size:16px;letter-spacing:1.252px;color:#fff">Magazynowe</div>
<div class="a tx" style="left:68.5px;top:457.96px;font-size:16px;letter-spacing:0.461px;color:#fff">Szukaj</div>
<div class="a tx" style="left:27.4px;top:492.96px;font-size:16px;letter-spacing:0.686px;color:#fff">Lokalizacje</div>
<div class="a tx" style="left:27.4px;top:545.36px;font-size:16px;letter-spacing:1.146px;color:#fff">Kontrahenci</div>
<div class="a tx" style="left:27.4px;top:580.36px;font-size:16px;letter-spacing:1.159px;color:#fff">Pracownicy</div>
<div class="a tx" style="left:27.4px;top:615.66px;font-size:16px;letter-spacing:0.950px;color:#3a3f44">Obiekty</div>
<div class="a tx" style="left:27.4px;top:650.56px;font-size:16px;letter-spacing:0.705px;color:#fff">Usługi</div>
<div class="a tx" style="left:68.3px;top:703.06px;font-size:16px;letter-spacing:1.213px;color:#fff">Import kartotek</div>
<div class="a tx" style="left:27.3px;top:755.56px;font-size:16px;letter-spacing:0.627px;color:#fff">Słowniki</div>
<div class="a tx" style="left:25px;top:954.10px;font-size:13px;letter-spacing:0.092px;color:#dfe4ea">StudioSystem © SoftwareStudio Sp. z o.o. - v2025.4.113.9244</div>
<div class="a tx" style="left:413.9px;top:954.10px;font-size:13px;letter-spacing:-0.272px;color:#f0893b">Licencja: CLIENT</div>
<div class="a tx" style="left:1476.7px;top:954.10px;font-size:13px;letter-spacing:-0.050px;color:#dfe4ea">| Komórka: MAGAZYN | Magazyn: MN | Oddział: CEN | Firma: 01</div>
<div class="a tx" style="left:1217px;top:604.36px;font-size:18px;letter-spacing:1.676px;color:#fff;-webkit-text-stroke:0.45px #fff">demo_nar_lm</div>
<div class="a tx" style="left:1217px;top:637.00px;font-size:15px;letter-spacing:0.353px;color:#d8d8d8">2025-06-19 21:48:52</div>
<!-- /TEXTS -->
</body></html>
